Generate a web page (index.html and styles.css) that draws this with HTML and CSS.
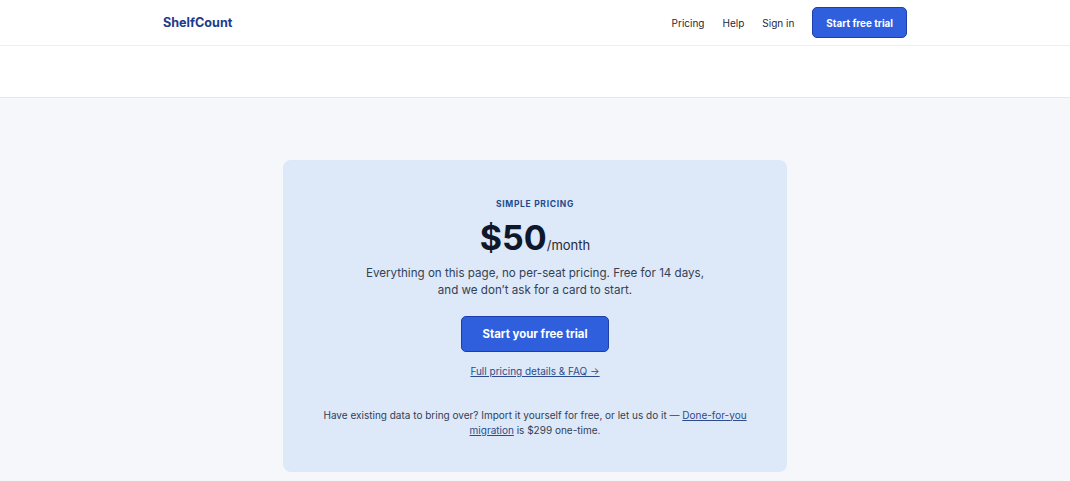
FILE: index.html
```html
<!doctype html>
<html lang="en">
<head>
	<meta charset="UTF-8" />
	<meta name="viewport" content="width=device-width, initial-scale=1.0">
	<title>ShelfCount - Pricing</title>
	<link rel="stylesheet" href="styles.css">
</head>
<body>
    <div id="header">
        <div class="wrap header_inner">
            <a class="logo" href="#">ShelfCount</a>
            <ul class="nav">
                <li><a href="#">Pricing</a></li>
                <li><a href="#">Help</a></li>
                <li><a href="#">Sign in</a></li>
                <li><a class="btn btn_small" href="#">Start free trial</a></li>
            </ul>
        </div>
    </div>
    <div id="band"></div>
    <div id="main">
        <div class="price_card">
            <span class="eyebrow">SIMPLE PRICING</span>
            <div class="price"><strong>$50</strong><span>/month</span></div>
            <p class="lead">Everything on this page, no per-seat pricing. Free for 14 days, and we don’t ask for a card to start.</p>
            <a class="btn btn_large" href="#">Start your free trial</a>
            <a class="more" href="#">Full pricing details &amp; FAQ →</a>
            <p class="note">Have existing data to bring over? Import it yourself for free, or let us do it — <a href="#">Done-for-you migration</a> is $299 one-time.</p>
        </div>
    </div>
</body>
</html>
```

FILE: styles.css
```css
* { margin: 0; padding: 0; box-sizing: border-box; }
html, body { width: 100%; }
body { font-family: Inter, "Noto Sans", sans-serif; color: #1f2937; background: #f6f7fb; }
a { text-decoration: none; color: inherit; }
ul { list-style: none; }

.wrap { max-width: 744px; margin: 0 auto; }

#header { height: 46px; background: #fff; border-bottom: 1px solid #eceef2; }
.header_inner { height: 45px; display: flex; align-items: center; justify-content: space-between; }
.logo { font-size: 12.6px; font-weight: 700; color: #1e3a8a; }
.nav { display: flex; align-items: center; gap: 18px; font-size: 10px; color: #1f2937; }

.btn { display: inline-flex; align-items: center; justify-content: center; font-weight: 700; color: #fff; background: #2f5fdc; border: 1px solid #1d3fa8; border-radius: 5px; }
.btn_small { height: 31px; padding: 0 13px; font-size: 9.9px; }
.btn_large { width: 148px; height: 36px; font-size: 11.4px; margin-top: 17.5px; }

#band { height: 52px; background: #fff; border-bottom: 1px solid #e5e7eb; }

#main { padding: 62px 0 40px; }
.price_card { width: 504px; margin: 0 auto; padding: 38px 30px 34.5px; background: #dde8f8; border-radius: 8px; display: flex; flex-direction: column; align-items: center; text-align: center; }
.eyebrow { font-size: 8.5px; line-height: 12px; font-weight: 700; letter-spacing: 0.7px; color: #1e4b8f; }
.price { margin-top: 8px; font-size: 34px; line-height: 40px; color: #0f172a; }
.price strong { font-weight: 700; }
.price span { font-size: 13px; line-height: 1; color: #1f2937; }
.lead { max-width: 345px; margin-top: 6.5px; font-size: 11.6px; line-height: 17px; color: #334155; }
.more { margin-top: 11.5px; font-size: 10px; line-height: 15px; color: #2c4c8c; text-decoration: underline; }
.note { max-width: 440px; margin-top: 29px; font-size: 10px; line-height: 15px; color: #334155; }
.note a { color: #2c4c8c; text-decoration: underline; }
```
